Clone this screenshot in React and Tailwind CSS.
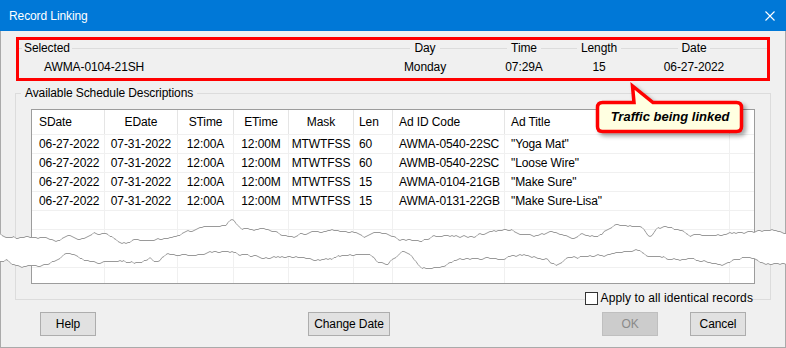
import React from "react";

function mulberry32(a) {
  return function () {
    a |= 0;
    a = (a + 0x6d2b79f5) | 0;
    let t = Math.imul(a ^ (a >>> 15), 1 | a);
    t = (t + Math.imul(t ^ (t >>> 7), 61 | t)) ^ t;
    return ((t ^ (t >>> 14)) >>> 0) / 4294967296;
  };
}

function makeLine(seed, mean) {
  const r = mulberry32(seed);
  const p1 = r() * 6.28, p2 = r() * 6.28, p3 = r() * 6.28;
  const spikes = [];
  for (let i = 0; i < 14; i++) {
    spikes.push({ c: r() * 786, h: (r() - 0.5) * 16, w: 5 + r() * 14 });
  }
  const pts = [];
  let j = 0;
  for (let x = -2; x <= 790; x += 2) {
    j = j * 0.92 + (r() - 0.5) * 1.4;
    let y =
      mean +
      4.5 * Math.sin(x * 0.017 + p1) +
      3 * Math.sin(x * 0.047 + p2) +
      1.5 * Math.sin(x * 0.11 + p3) +
      j * 1.6;
    for (const s of spikes) {
      const d = Math.abs(x - s.c);
      if (d < s.w) y -= s.h * (1 - d / s.w);
    }
    y = Math.max(mean - 13, Math.min(mean + 11, y));
    pts.push([x, Math.round(y) + 0.5]);
  }
  return pts;
}

const TOP = makeLine(7, 232);
const BOT = makeLine(23, 259);

function Tear() {
  const topStr = TOP.map((p) => p.join(",")).join(" ");
  const botStr = BOT.map((p) => p.join(",")).join(" ");
  const poly = topStr + " " + [...BOT].reverse().map((p) => p.join(",")).join(" ");
  return (
    <svg
      className="absolute left-0 top-0 pointer-events-none"
      width="786"
      height="348"
      viewBox="0 0 786 348"
    >
      <polygon points={poly} fill="#ffffff" />
      <polyline points={topStr} fill="none" stroke="#9a9a9a" strokeWidth="1" />
      <polyline points={botStr} fill="none" stroke="#9a9a9a" strokeWidth="1" />
    </svg>
  );
}

function Callout() {
  return (
    <>
      <svg
        className="absolute left-[590px] top-[78px] pointer-events-none drop-shadow-[3px_3px_2px_rgba(0,0,0,0.35)]"
        width="170"
        height="68"
        viewBox="0 0 170 68"
      >
        <path
          d="M 12.5 24.5 H 44 L 42.5 8 L 63 24.5 H 146.5 Q 151.5 24.5 151.5 29.5 V 48.5 Q 151.5 53.5 146.5 53.5 H 12.5 Q 7.5 53.5 7.5 48.5 V 29.5 Q 7.5 24.5 12.5 24.5 Z"
          fill="#ffffe1"
          stroke="#ff0000"
          strokeWidth="3.5"
          strokeLinejoin="miter"
        />
      </svg>
      <div className="absolute left-[597px] top-[101px] w-[146px] h-[32px] flex items-center justify-center text-[13px] font-bold italic text-black tracking-normal">
        Traffic being linked
      </div>
    </>
  );
}

const COLS = [
  { w: "w-[73px]", h: "SDate", align: "justify-start pl-[7px]" },
  { w: "w-[73px]", h: "EDate", align: "justify-center" },
  { w: "w-[56px]", h: "STime", align: "justify-center" },
  { w: "w-[55px]", h: "ETime", align: "justify-center" },
  { w: "w-[65px]", h: "Mask", align: "justify-center" },
  { w: "w-[39px]", h: "Len", align: "justify-start pl-[5px]" },
  { w: "w-[112px]", h: "Ad ID Code", align: "justify-start pl-[6px]" },
  { w: "w-[225px]", h: "Ad Title", align: "justify-start pl-[6px]" },
];

const ROWS = [
  ["06-27-2022", "07-31-2022", "12:00A", "12:00M", "MTWTFSS", "60", "AWMA-0540-22SC", "\"Yoga Mat\""],
  ["06-27-2022", "07-31-2022", "12:00A", "12:00M", "MTWTFSS", "60", "AWMB-0540-22SC", "\"Loose Wire\""],
  ["06-27-2022", "07-31-2022", "12:00A", "12:00M", "MTWTFSS", "15", "AWMA-0104-21GB", "\"Make Sure\""],
  ["06-27-2022", "07-31-2022", "12:00A", "12:00M", "MTWTFSS", "15", "AWMA-0131-22GB", "\"Make Sure-Lisa\""],
  ["", "", "", "", "", "", "", ""],
  ["", "", "", "", "", "", "", ""],
  ["", "", "", "", "", "", "", ""],
  ["", "", "", "", "", "", "", ""],
];

function ListView() {
  return (
    <div className="mt-[8px] mx-[15px] h-[175px] border border-[#9c9c9c] bg-white overflow-hidden">
      <div className="flex h-[25px] border-b border-[#f0f0f0]">
        {COLS.map((c, i) => (
          <div key={i} className={`${c.w} shrink-0 flex items-center h-full`}>
            <span className={`flex flex-1 whitespace-nowrap ${c.align}`}>{c.h}</span>
            <span className="w-px h-full bg-[#e5e5e5]" />
          </div>
        ))}
        <div className="flex-1" />
      </div>
      {ROWS.map((r, ri) => (
        <div key={ri} className="flex h-[19px] border-b border-[#f0f0f0]">
          {r.map((v, ci) => (
            <div
              key={ci}
              className={`${COLS[ci].w} shrink-0 flex items-center border-r border-[#f0f0f0] whitespace-nowrap ${COLS[ci].align}`}
            >
              {v}
            </div>
          ))}
          <div className="flex-1" />
        </div>
      ))}
    </div>
  );
}

function Line({ className = "flex-1" }) {
  return <div className={`${className} h-px bg-[#dcdcdc]`} />;
}

function HeadCell({ w, label }) {
  return (
    <div className={`${w} shrink-0 flex items-center`}>
      <Line />
      <span className="px-[4px]">{label}</span>
      <Line />
    </div>
  );
}

function Button({ w, ml, children, disabled }) {
  return (
    <div
      className={`${w} ${ml} h-[24px] flex items-center justify-center border ${
        disabled ? "border-[#bfbfbf] bg-[#cccccc] text-[#8a8a8a]" : "border-[#adadad] bg-[#e1e1e1] text-black"
      }`}
    >
      {children}
    </div>
  );
}

export default function App() {
  return (
    <div className="relative w-[786px] h-[348px] overflow-hidden bg-[#f0f0f0] text-[12px] leading-[16px] tracking-[-0.1px] text-black font-['Liberation_Sans',Arial,sans-serif]">
      <div className="h-[31px] bg-[#0078d7] flex items-center justify-between pl-[9px] pr-[11px] text-white">
        <span>Record Linking</span>
        <svg width="10" height="10" viewBox="0 0 10 10">
          <path d="M0.5 0.5 L9.5 9.5 M9.5 0.5 L0.5 9.5" stroke="#ffffff" strokeWidth="1.1" fill="none" />
        </svg>
      </div>
      <div className="h-[317px] border-x border-b border-[#aaaaaa] px-[14px] flex flex-col">
        <div className="mt-[6px] ml-px w-[754px] h-[44px] border-[3px] border-[#ff0000] flex flex-col">
          <div className="h-[16px] flex items-center">
            <div className="w-[357px] shrink-0 flex items-center">
              <Line className="w-[3px]" />
              <span className="px-[2px]">Selected</span>
              <Line />
            </div>
            <HeadCell w="w-[98px]" label="Day" />
            <HeadCell w="w-[100px]" label="Time" />
            <HeadCell w="w-[50px]" label="Length" />
            <HeadCell w="w-[140px]" label="Date" />
            <Line />
          </div>
          <div className="mt-[3px] h-[16px] flex items-center">
            <div className="w-[357px] shrink-0 pl-[25px]">AWMA-0104-21SH</div>
            <div className="w-[98px] shrink-0 text-center">Monday</div>
            <div className="w-[100px] shrink-0 text-center">07:29A</div>
            <div className="w-[50px] shrink-0 text-center">15</div>
            <div className="w-[140px] shrink-0 text-center">06-27-2022</div>
          </div>
        </div>
        <fieldset className="mt-[4px] m-0 p-0 pb-[15px] border border-[#dcdcdc] min-w-0">
          <legend className="ml-[5px] px-[4px] leading-[16px]">Available Schedule Descriptions</legend>
          <ListView />
        </fieldset>
        <div className="-mt-[9px] h-[14px] flex justify-end">
          <div className="mr-[18px] flex items-center bg-[#f0f0f0] h-[14px]">
            <div className="w-[13px] h-[13px] border border-[#333333] bg-white" />
            <span className="ml-[3px] tracking-[0.1px]">Apply to all identical records</span>
          </div>
        </div>
        <div className="mt-[7px] flex">
          <Button w="w-[56px]" ml="ml-[25px]">Help</Button>
          <Button w="w-[82px]" ml="ml-[212px]">Change Date</Button>
          <Button w="w-[56px]" ml="ml-[212px]" disabled>OK</Button>
          <Button w="w-[56px]" ml="ml-[32px]">Cancel</Button>
        </div>
      </div>
      <Tear />
      <Callout />
    </div>
  );
}
